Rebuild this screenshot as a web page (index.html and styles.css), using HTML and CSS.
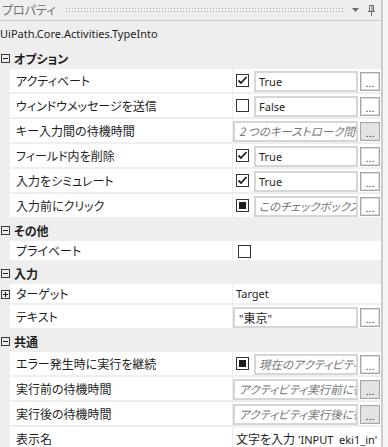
FILE: index.html
```html
<!DOCTYPE html>
<html lang="ja">
<head>
<meta charset="utf-8">
<link rel="stylesheet" href="styles.css">
</head>
<body>
<div class="window">
  <div class="titlebar">
    <span class="title">プロパティ</span>
    <span class="grip"></span>
    <svg class="tri" width="7" height="4" viewBox="0 0 7 4"><path d="M0 0H7L3.5 4Z" fill="#6d6d6d"/></svg>
    <svg class="pin" width="7" height="11" viewBox="0 0 7 11"><path d="M1.5 0.5H5.5V6.5H1.5Z M0 6.5H7 M3.5 6.5V11" fill="none" stroke="#6d6d6d" stroke-width="1"/><path d="M4 1V6" stroke="#6d6d6d" stroke-width="1"/></svg>
  </div>
  <div class="typename">UiPath.Core.Activities.TypeInto</div>

  <div class="group"><span class="exp minus"></span><span class="gname">オプション</span></div>
  <div class="prop">
    <div class="name">アクティベート</div>
    <div class="val"><span class="cb checked"><svg width="11" height="11" viewBox="0 0 11 11"><path d="M1.5 5.5L4 8L9.5 2" fill="none" stroke="#1e1e1e" stroke-width="1.8"/></svg></span><span class="box">True</span><span class="btn">...</span></div>
  </div>
  <div class="prop">
    <div class="name">ウィンドウメッセージを送信</div>
    <div class="val"><span class="cb"></span><span class="box">False</span><span class="btn">...</span></div>
  </div>
  <div class="prop">
    <div class="name">キー入力間の待機時間</div>
    <div class="val"><span class="box full hint">2 つのキーストローク間の待機時間 (ミリ秒)</span><span class="btn grey">...</span></div>
  </div>
  <div class="prop">
    <div class="name">フィールド内を削除</div>
    <div class="val"><span class="cb checked"><svg width="11" height="11" viewBox="0 0 11 11"><path d="M1.5 5.5L4 8L9.5 2" fill="none" stroke="#1e1e1e" stroke-width="1.8"/></svg></span><span class="box">True</span><span class="btn">...</span></div>
  </div>
  <div class="prop">
    <div class="name">入力をシミュレート</div>
    <div class="val"><span class="cb checked"><svg width="11" height="11" viewBox="0 0 11 11"><path d="M1.5 5.5L4 8L9.5 2" fill="none" stroke="#1e1e1e" stroke-width="1.8"/></svg></span><span class="box">True</span><span class="btn">...</span></div>
  </div>
  <div class="prop">
    <div class="name">入力前にクリック</div>
    <div class="val"><span class="cb mixed"><span class="sq"></span></span><span class="box hint">このチェックボックスを選択すると</span><span class="btn">...</span></div>
  </div>

  <div class="group"><span class="exp minus"></span><span class="gname">その他</span></div>
  <div class="prop short">
    <div class="name">プライベート</div>
    <div class="val"><span class="cb solo"></span></div>
  </div>

  <div class="group"><span class="exp minus"></span><span class="gname">入力</span></div>
  <div class="prop short">
    <span class="exp plus gutter"></span>
    <div class="name">ターゲット</div>
    <div class="val"><span class="plain">Target</span></div>
  </div>
  <div class="prop">
    <div class="name">テキスト</div>
    <div class="val"><span class="box full">"<span class="cjk">東京</span>"</span><span class="btn">...</span></div>
  </div>

  <div class="group"><span class="exp minus"></span><span class="gname">共通</span></div>
  <div class="prop">
    <div class="name">エラー発生時に実行を継続</div>
    <div class="val"><span class="cb mixed"><span class="sq"></span></span><span class="box hint">現在のアクティビティ、エラー</span><span class="btn">...</span></div>
  </div>
  <div class="prop">
    <div class="name">実行前の待機時間</div>
    <div class="val"><span class="box full hint">アクティビティ実行前に待機する時間</span><span class="btn grey">...</span></div>
  </div>
  <div class="prop">
    <div class="name">実行後の待機時間</div>
    <div class="val"><span class="box full hint">アクティビティ実行後に待機する時間</span><span class="btn grey">...</span></div>
  </div>
  <div class="prop">
    <div class="name">表示名</div>
    <div class="val"><span class="plain"><span class="cjk">文字を入力</span> 'INPUT&nbsp; eki1_in'</span></div>
  </div>
</div>
</body>
</html>
```

FILE: styles.css
```css
html, body {
  margin: 0;
  padding: 0;
}
body {
  width: 388px;
  height: 447px;
  overflow: hidden;
  background: #f5f5f5;
  font-family: "Noto Sans", "Noto Sans CJK JP", sans-serif;
  font-size: 12px;
  color: #1e1e1e;
  font-feature-settings: "palt";
}
.window {
  width: 381px;
  height: 447px;
  background: #eeeeef;
  border-right: 2px solid #cccccc;
  overflow: hidden;
}
.titlebar {
  height: 20px;
  border-bottom: 1px solid #cccccc;
  display: flex;
  align-items: center;
}
.title {
  padding-left: 2px;
  color: #717171;
  font-family: "Noto Sans CJK JP", sans-serif;
  line-height: 20px;
}
.grip {
  flex: 1;
  height: 5px;
  margin: 0 7px 0 10px;
  background-image: radial-gradient(circle at 0.5px 0.5px, #a8a8a8 0.7px, transparent 0.8px);
  background-size: 3px 3px;
}
.tri {
  margin-right: 9px;
  display: block;
}
.pin {
  margin-right: 6px;
  display: block;
}
.typename {
  height: 26px;
  line-height: 26px;
  font-size: 11px;
  white-space: nowrap;
}
.group {
  height: 22px;
  display: flex;
  align-items: center;
  font-weight: bold;
}
.gname {
  font-family: "Noto Sans CJK JP", sans-serif;
  margin-left: 4px;
}
.exp {
  width: 9px;
  height: 9px;
  box-sizing: border-box;
  border: 1px solid #3a3a3a;
  margin-left: 1px;
  position: relative;
  flex: none;
}
.exp::before {
  content: "";
  position: absolute;
  left: 1px;
  top: 3px;
  width: 5px;
  height: 1px;
  background: #1e1e1e;
}
.exp.plus::after {
  content: "";
  position: absolute;
  left: 3px;
  top: 1px;
  width: 1px;
  height: 5px;
  background: #1e1e1e;
}
.prop {
  height: 23px;
  margin-bottom: 2px;
  display: flex;
  padding-left: 10px;
  position: relative;
}
.prop.short {
  height: 19px;
}
.gutter {
  position: absolute;
  left: 0;
  top: 6px;
  margin-left: 1px;
}
.name {
  width: 216px;
  padding-left: 6px;
  background: #ffffff;
  border-right: 1px solid #ececec;
  display: flex;
  align-items: center;
  white-space: nowrap;
  font-family: "Noto Sans CJK JP", sans-serif;
}
.val {
  width: 148px;
  background: #ffffff;
  display: flex;
  align-items: flex-end;
  overflow: hidden;
  white-space: nowrap;
  font-size: 11px;
}
.cjk {
  font-family: "Noto Sans CJK JP", sans-serif;
  font-size: 12px;
}
.cb {
  width: 13px;
  height: 13px;
  box-sizing: border-box;
  border: 1px solid #333333;
  background: #ffffff;
  margin: 0 5px 5px 3px;
  flex: none;
  display: flex;
  align-items: center;
  justify-content: center;
}
.cb.solo {
  margin: 0 0 2px 5px;
}
.cb .sq {
  width: 7px;
  height: 7px;
  background: #1e1e1e;
}
.box {
  flex: 1;
  min-width: 0;
  height: 21px;
  box-sizing: border-box;
  border: 2px solid #d6d6d6;
  padding-left: 3px;
  line-height: 17px;
  overflow: hidden;
  white-space: nowrap;
}
.box.full {
  padding-left: 4px;
}
.hint {
  font-style: italic;
  color: #767676;
  font-family: "Noto Sans CJK JP", sans-serif;
  font-size: 11.5px;
}
.btn {
  flex: none;
  width: 20px;
  height: 19px;
  box-sizing: border-box;
  margin: 0 1px 1px 2px;
  border: 1px solid #a6a6a6;
  box-shadow: inset 0 0 0 1px #dedede;
  background: #ffffff;
  font-family: "Liberation Sans", sans-serif;
  font-size: 11px;
  line-height: 20px;
  text-align: center;
  color: #333333;
}
.btn.grey {
  background: #e3e3e3;
}
.plain {
  padding-left: 3px;
  align-self: center;
  white-space: nowrap;
}
```
